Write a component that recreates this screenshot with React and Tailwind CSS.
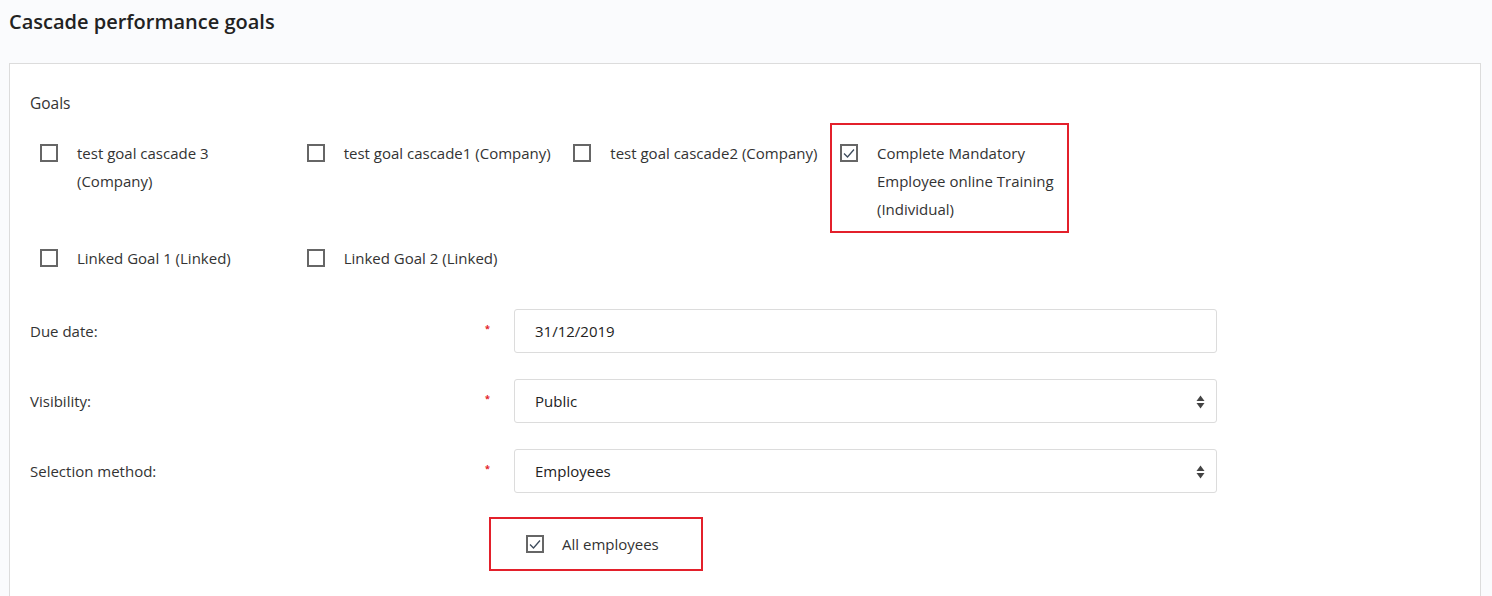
import React from "react";

function Box({ checked }) {
  return (
    <div className="w-[18px] h-[18px] border-2 border-[#666] bg-white shrink-0 flex items-center justify-center">
      {checked && (
        <svg width="14" height="14" viewBox="0 0 14 14">
          <polyline points="2,7.5 5.5,11 12,3.5" fill="none" stroke="#3d4b5c" strokeWidth="1.3" />
        </svg>
      )}
    </div>
  );
}

function Goal({ lines, checked, highlight }) {
  return (
    <div className="relative pl-[10px] flex">
      {highlight && (
        <div className="absolute left-0 top-[-16px] w-[239px] h-[110px] border-2 border-[#e3202b]" />
      )}
      <div className="mt-[5px]">
        <Box checked={checked} />
      </div>
      <div className="ml-[19px] text-[15px] leading-[28px] text-[#333]">
        {lines.map((l, i) => (
          <div key={i} className="whitespace-nowrap">{l}</div>
        ))}
      </div>
    </div>
  );
}

function Arrows() {
  return (
    <svg width="9" height="14" viewBox="0 0 9 14" className="absolute right-[11px] top-[15px]">
      <polygon points="0.5,6 4.5,0.5 8.5,6" fill="#444" />
      <polygon points="0.5,8 8.5,8 4.5,13.5" fill="#444" />
    </svg>
  );
}

function Row({ label, value, select }) {
  return (
    <div className="flex items-center h-[44px]">
      <div className="w-[455px] text-[15px] text-[#333]">{label}</div>
      <div className="w-[29px] text-[#e3202b] text-[9px] font-bold leading-none -mt-[6px]">*</div>
      <div className="relative w-[703px] h-[44px] border border-[#dcdcdc] rounded-[3px] bg-white flex items-center pl-[20px] text-[15px] text-[#222]">
        {value}
        {select && <Arrows />}
      </div>
    </div>
  );
}

export default function App() {
  return (
    <div className="min-h-screen bg-[#fafbfd] pl-[9px] pr-[11px] pt-[10px]" style={{ fontFamily: "'Open Sans', sans-serif" }}>
      <h1 className="text-[20px] leading-[24px] font-semibold text-[#222]">Cascade performance goals</h1>
      <div className="mt-[29px] border border-[#dcdcdc] bg-white px-[20px] pt-[29px] pb-[60px]">
        <div className="text-[15.5px] leading-[20px] text-[#333]">Goals</div>
        <div className="mt-[26px] grid grid-cols-[repeat(4,266.67px)] gap-y-[21px]">
          <Goal lines={["test goal cascade 3", "(Company)"]} />
          <Goal lines={["test goal cascade1 (Company)"]} />
          <Goal lines={["test goal cascade2 (Company)"]} />
          <Goal lines={["Complete Mandatory", "Employee online Training", "(Individual)"]} checked highlight />
          <Goal lines={["Linked Goal 1 (Linked)"]} />
          <Goal lines={["Linked Goal 2 (Linked)"]} />
        </div>
        <div className="mt-[37px] flex flex-col gap-[26px]">
          <Row label="Due date:" value="31/12/2019" />
          <Row label="Visibility:" value="Public" select />
          <Row label="Selection method:" value="Employees" select />
        </div>
        <div className="mt-[24px] ml-[459px] w-[214px] h-[54px] border-2 border-[#e3202b] flex items-center pl-[35px]">
          <Box checked />
          <span className="ml-[18px] text-[15px] text-[#333]">All employees</span>
        </div>
      </div>
    </div>
  );
}
